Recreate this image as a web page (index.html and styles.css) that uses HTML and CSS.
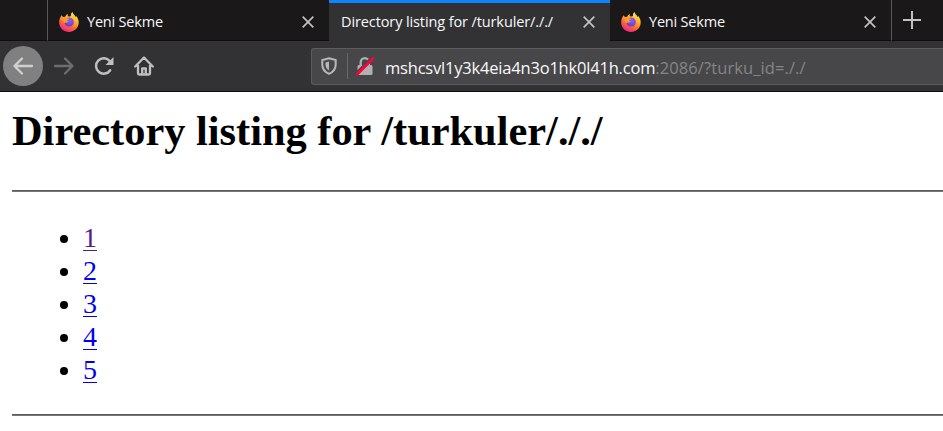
FILE: index.html
```html
<!DOCTYPE html>
<html lang="tr">
<head>
<meta charset="utf-8">
<title>Directory listing for /turkuler/././</title>
<link rel="stylesheet" href="styles.css">
</head>
<body>
<svg width="0" height="0" class="defs">
  <defs>
    <linearGradient id="flame" x1=".8" y1="0" x2=".3" y2="1"><stop offset="0" stop-color="#fff44f"/><stop offset=".35" stop-color="#ffb52e"/><stop offset=".65" stop-color="#ff6a35"/><stop offset="1" stop-color="#f0208a"/></linearGradient>
    <radialGradient id="globe" cx=".6" cy=".3" r=".8"><stop offset="0" stop-color="#9059ff"/><stop offset="1" stop-color="#5b40b8"/></radialGradient>
    <symbol id="firefox" viewBox="0 0 20 20">
      <path fill="url(#flame)" d="M2.6 3.2 4 5l2.2-.3C7.200 2.800 8 2.300 8.800 2.100L8.700 4.300 11 4.500 12 3.800C11.700 2.200 12.400.8 13.500 0c.4 2 1.700 2.700 2.700 4l.4 1.200.5-1.300c2.200 2.200 2.900 4.900 2.500 7.900-.6 4.700-4.700 8.200-9.600 8.200C4.700 20 .5 16 .2 11 .1 8 .9 5.300 2.600 3.200Z"/>
      <path fill="url(#globe)" d="M7.600 6.200c2.300-1.400 6.100-.4 7 2.500.9 3.100-1.300 5.900-4.500 5.900-2.600 0-4.600-1.900-4.600-4.200 1.500.9 3.500.5 4.300-.7-.4-.8-1.800-.5-3.100-1.200Z"/>
      <path fill="#ff9a2b" d="M4 5c1.600-.3 2.800.2 3.600 1.200l2.600.6c-.2 1.200-2.200 1.400-2.300 2.600-1.200.1-2.300.7-2.400 1.600C3.800 9.500 3.300 7.200 4 5Z"/>
    </symbol>
    <symbol id="close" viewBox="0 0 12 12"><path d="m.7.700 10.600 10.600M11.300.700.700 11.300" fill="none" stroke="#c3c2c3" stroke-width="1.700"/></symbol>
  </defs>
</svg>
<header class="tabs">
  <div class="tab-lead"></div>
  <div class="tab"><svg class="favicon"><use href="#firefox"/></svg><span class="label new">Yeni Sekme</span><svg class="close"><use href="#close"/></svg></div>
  <div class="tab active"><span class="label listing">Directory listing for /turkuler/././</span><svg class="close"><use href="#close"/></svg></div>
  <div class="tab"><svg class="favicon"><use href="#firefox"/></svg><span class="label new">Yeni Sekme</span><svg class="close"><use href="#close"/></svg></div>
  <div class="add"><svg width="18" height="18" viewBox="0 0 18 18"><path d="M9 0v18M0 9h18" stroke="#c3c2c3" stroke-width="2"/></svg></div>
</header>
<nav class="toolbar">
  <span class="back"><svg width="20" height="18" viewBox="0 0 20 18"><path d="M19 9H2M9 1.500 1.500 9 9 16.500"/></svg></span>
  <svg class="forward" width="20" height="18" viewBox="0 0 20 18"><path d="M1 9h17M11 1.500 18.500 9 11 16.500"/></svg>
  <svg class="reload" width="20" height="20" viewBox="0 0 20 20"><path d="M16.200 14.200A7.700 7.700 0 1 1 15.600 5L17.500 7"/><path class="solid" d="M19.500 1v8h-8Z"/></svg>
  <svg class="home" width="20" height="20" viewBox="0 0 20 20"><path d="M1.200 10.500 10 1.500l8.800 9M4 9v8.200q0 1.300 1.300 1.300h9.400q1.300 0 1.300-1.300V9M8.200 18.500v-6h3.600v6"/></svg>
  <div class="address">
    <svg class="shield" width="16" height="18" viewBox="0 0 16 18"><path d="M8 1.200 14.700 3v4.500c0 4.300-2.500 7.500-6.700 9.300-4.200-1.800-6.700-5-6.700-9.300V3Z" fill="none" stroke="#b8b8ba" stroke-width="2"/><path d="M8 4.500v9C5.500 12 4.500 10 4.500 7.500v-2Z" fill="#b8b8ba"/></svg>
    <span class="divider"></span>
    <svg class="lock" width="18" height="18" viewBox="0 0 18 18"><path d="M4.700 9V5.200a4.100 4.100 0 0 1 8.200 0V9" fill="none" stroke="#b1b1b3" stroke-width="2.300"/><rect x="1.500" y="8" width="15" height="10" rx="1.500" fill="#b1b1b3"/><path d="M-.500 16.500 15.500.500" stroke="#474749" stroke-width="2"/><path d="M1.500 17 17 1.500" stroke="#ff0039" stroke-width="2.800" stroke-linecap="round"/></svg>
    <span class="url"><b>mshcsvl1y3k4eia4n3o1hk0l41h.com</b><span class="path">:2086/?turku_id=././</span></span>
  </div>
</nav>
<main>
  <h1>Directory listing for /turkuler/././</h1>
  <hr>
  <ul>
    <li><a class="visited" href="#1">1</a></li>
    <li><a href="#2">2</a></li>
    <li><a href="#3">3</a></li>
    <li><a href="#4">4</a></li>
    <li><a href="#5">5</a></li>
  </ul>
  <hr>
</main>
</body>
</html>
```
FILE: styles.css
```css
* { box-sizing: border-box; }
body { margin: 0; width: 943px; height: 431px; overflow: hidden; background: #fff; font-family: "Open Sans", "Noto Sans", sans-serif; }
svg { display: block; flex: none; overflow: visible; }
.defs { position: absolute; }
.tabs { display: flex; height: 41px; background: #1b1819; }
.tab-lead { width: 48px; border-right: 1px solid #58585a; border-bottom: 1px solid #0e0e0f; }
.tab { width: 281px; display: flex; align-items: center; padding: 3px 15.5px 0 11px; border-bottom: 1px solid #0e0e0f; }
.tab.active { background: #323234; border-top: 3px solid #0a84ff; border-bottom: 0; padding: 0 15.5px 0 12px; }
.favicon { width: 20px; height: 20px; margin-right: 8px; }
.close { width: 12px; height: 12px; margin-left: auto; }
.label { color: #f9f9fa; font-size: 14.5px; line-height: 20px; white-space: nowrap; }
.new { letter-spacing: -.2px; }
.listing { letter-spacing: -.11px; }
.add { flex: 1; border-left: 1px solid #58585a; border-bottom: 1px solid #0e0e0f; padding: 11px 0 0 11px; }
.toolbar { height: 51px; background: #323234; border-bottom: 1px solid #0c0c0d; display: flex; align-items: center; padding-left: 3px; }
.toolbar > svg, .back svg { fill: none; stroke: #d0d0d2; stroke-width: 2.300; stroke-linecap: round; stroke-linejoin: round; }
.back { width: 40px; height: 40px; border-radius: 50%; background: #808081; display: flex; align-items: center; justify-content: center; }
.toolbar .forward { margin-left: 11px; stroke: #6d6d6f; }
.toolbar > .reload, .toolbar > .home { stroke: #bfbfc1; }
.toolbar .reload { margin-left: 20px; stroke-width: 2.500; }
.toolbar .solid { fill: #bfbfc1; stroke: none; }
.toolbar .home { margin-left: 20px; }
.address { flex: 1; height: 37px; margin-left: 157px; border: 1px solid #5c5c5e; border-right: 0; border-radius: 3px 0 0 3px; background: #474749; display: flex; align-items: center; padding-left: 9px; }
.divider { width: 1px; height: 26px; background: #68686a; margin: 0 8px 0 10px; }
.url { margin: 2px 0 0 11px; color: #858587; font-size: 16.500px; white-space: nowrap; letter-spacing: .1px; }
.url b { font-weight: 400; color: #f9f9fa; letter-spacing: -.2px; }
main { padding: 14px 0 0 12px; font-family: "Liberation Serif", serif; color: #000; }
h1 { margin: 0; font-size: 42.4px; line-height: 50px; font-weight: 700; white-space: nowrap; }
hr { height: 2px; border: 0; margin: 0; background: linear-gradient(#5b5b5b 50%, #777 50%); }
h1 + hr { margin-top: 34px; }
ul { margin: 29px 0 28px; padding: 0 0 0 71px; font-size: 28px; line-height: 33px; }
a { color: #00e; text-decoration: underline; text-decoration-thickness: 1px; text-underline-offset: 3px; }
a.visited { color: #551a8b; }
```
